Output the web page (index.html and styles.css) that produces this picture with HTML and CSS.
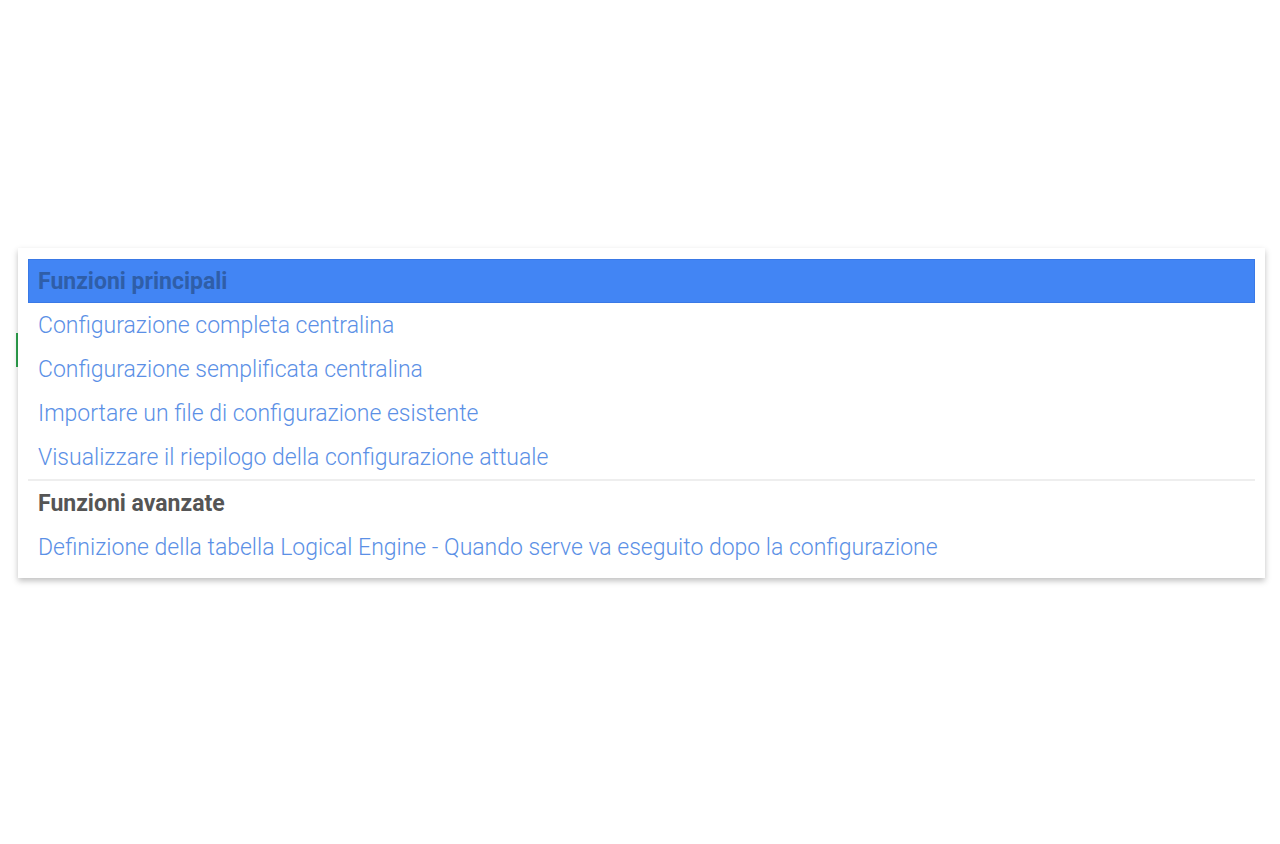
FILE: index.html
```html
<!DOCTYPE html>
<html lang="it">
<head>
    <meta charset="UTF-8">
    <meta name="viewport" content="width=device-width, initial-scale=1.0">
    <title>Menu funzioni</title>
    <link rel="stylesheet" href="styles.css">
</head>
<body>
    <div class="page">
        <div class="green-mark"></div>
        <div class="menu">
            <div class="menu-group">
                <div class="menu-header active">Funzioni principali</div>
                <div class="menu-item">Configurazione completa centralina</div>
                <div class="menu-item">Configurazione semplificata centralina</div>
                <div class="menu-item">Importare un file di configurazione esistente</div>
                <div class="menu-item">Visualizzare il riepilogo della configurazione attuale</div>
            </div>
            <div class="menu-group">
                <div class="menu-header">Funzioni avanzate</div>
                <div class="menu-item">Definizione della tabella Logical Engine - Quando serve va eseguito dopo la configurazione</div>
            </div>
        </div>
    </div>
</body>
</html>
```

FILE: styles.css
```css
:root {
    --item-blue: #5b90e6;
    --active-bg: #4285f4;
    --active-border: #3a79e6;
    --active-text: #2f5ea8;
    --header-text: #555555;
}

body {
    margin: 0;
    padding: 0;
    background: #ffffff;
    font-family: Roboto, "Liberation Sans", sans-serif;
}

.page {
    position: relative;
    padding: 248px 15px 40px 18px;
}

/* edge of the green button hidden behind the menu */
.green-mark {
    position: absolute;
    left: 16px;
    top: 333px;
    width: 2px;
    height: 34px;
    background: #2ea44f;
}

.menu {
    position: relative;
    background: #ffffff;
    padding: 11px 10px 9px;
    box-shadow: 0 3px 6px rgba(0, 0, 0, 0.25);
}

.menu-group + .menu-group {
    border-top: 2px solid #eeeeee;
}

.menu-header,
.menu-item {
    box-sizing: border-box;
    height: 44px;
    padding: 1px 0 0 10px;
    line-height: 43px;
    font-size: 23px;
    white-space: nowrap;
}

.menu-header {
    font-weight: 700;
    color: var(--header-text);
}

.menu-header.active {
    padding: 0 0 0 9px;
    border: 1px solid var(--active-border);
    line-height: 44px;
    background: var(--active-bg);
    color: var(--active-text);
}

.menu-item {
    font-weight: 300;
    color: var(--item-blue);
    cursor: pointer;
}
```
